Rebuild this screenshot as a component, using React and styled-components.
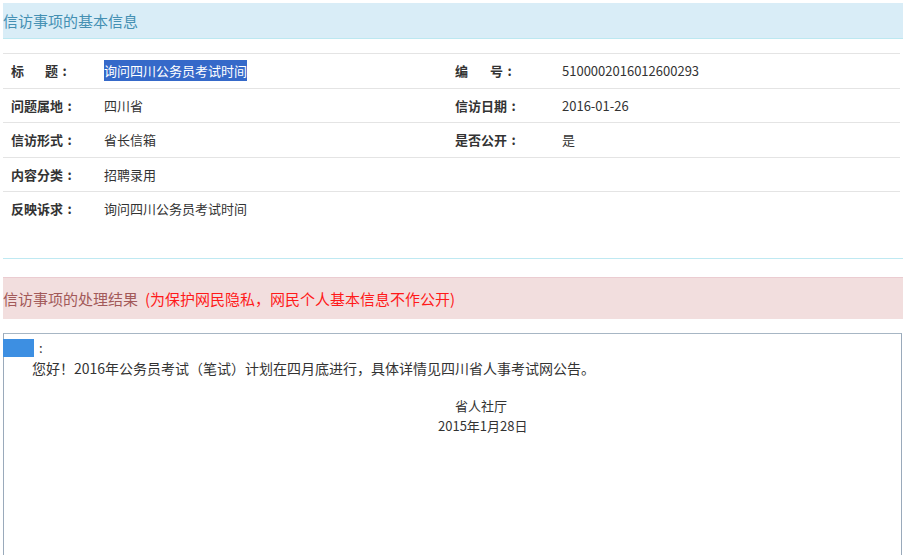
import React from "react";
import styled, { createGlobalStyle } from "styled-components";

const GlobalStyle = createGlobalStyle`
  html, body {
    margin: 0;
    padding: 0;
    background: #fff;
  }
  body {
    font-family: "Noto Sans CJK SC", "Noto Sans", "Liberation Sans", sans-serif;
    font-size: 13px;
    color: #333;
  }
`;

const Page = styled.div`
  padding: 3px 5px 0 3px;
  width: 900px;
`;

const BlueHead = styled.div`
  height: 35px;
  line-height: 35px;
  background: #d9edf7;
  border-bottom: 1px solid #bce8f1;
  color: #4490b3;
  font-size: 15px;
`;

const InfoSection = styled.div`
  margin-top: 14px;
  padding-bottom: 32px;
  border-bottom: 1px solid #bfe9f2;
`;

const Row = styled.div`
  display: grid;
  grid-template-columns: 101px 343px 115px 1fr;
  align-items: center;
  height: 34.5px;
  border-top: 1px solid #e4e4e4;
  width: 897px;
  box-sizing: border-box;
`;

const Label = styled.div`
  padding-left: 8px;
  font-weight: bold;
  color: #333;
  white-space: nowrap;
`;

const Value = styled.div`
  color: #333;
  white-space: nowrap;
`;

const Gap = styled.span`
  display: inline-block;
  width: ${(p) => p.$w}px;
`;

const Colon = styled.span`
  display: inline-block;
  width: 13px;
  text-align: center;
`;

const Selected = styled.span`
  background: #3569c9;
  color: #fff;
  padding: 1px 0;
`;

const PinkHead = styled.div`
  margin-top: 18px;
  height: 41px;
  line-height: 41px;
  background: #f2dede;
  border-top: 1px solid #ebccd1;
  color: #a25959;
  font-size: 15px;
`;

const Notice = styled.span`
  color: #ff1a1a;
  margin-left: 7px;
`;

const ReplyBox = styled.div`
  margin-top: 14px;
  height: 240px;
  border: 1px solid #9aaabb;
  border-top-color: #a7b6c4;
  padding-top: 4px;
  line-height: 20px;
  box-sizing: border-box;
  width: 899px;
`;

const Line = styled.div`
  padding-left: ${(p) => p.$indent || 0}px;
  font-size: ${(p) => p.$size || 13}px;
  white-space: nowrap;
`;

const NameMask = styled.span`
  display: inline-block;
  width: 31px;
  height: 18px;
  margin-left: -1px;
  vertical-align: -4px;
  background: #3d8fe2;
  margin-right: 5px;
`;

const Sign = styled.div`
  margin-top: 18px;
`;

export default function App() {
  return (
    <>
      <GlobalStyle />
      <Page>
        <BlueHead>信访事项的基本信息</BlueHead>
        <InfoSection>
          <Row>
            <Label>
              标<Gap $w={21} />题<Colon>:</Colon>
            </Label>
            <Value>
              <Selected>询问四川公务员考试时间</Selected>
            </Value>
            <Label>
              编<Gap $w={22} />号<Colon>:</Colon>
            </Label>
            <Value>5100002016012600293</Value>
          </Row>
          <Row>
            <Label>问题属地<Colon>:</Colon></Label>
            <Value>四川省</Value>
            <Label>信访日期<Colon>:</Colon></Label>
            <Value>2016-01-26</Value>
          </Row>
          <Row>
            <Label>信访形式<Colon>:</Colon></Label>
            <Value>省长信箱</Value>
            <Label>是否公开<Colon>:</Colon></Label>
            <Value>是</Value>
          </Row>
          <Row>
            <Label>内容分类<Colon>:</Colon></Label>
            <Value>招聘录用</Value>
            <Label />
            <Value />
          </Row>
          <Row>
            <Label>反映诉求<Colon>:</Colon></Label>
            <Value>询问四川公务员考试时间</Value>
            <Label />
            <Value />
          </Row>
        </InfoSection>
        <PinkHead>
          信访事项的处理结果<Notice>(为保护网民隐私，网民个人基本信息不作公开)</Notice>
        </PinkHead>
        <ReplyBox>
          <Line>
            <NameMask />:
          </Line>
          <Line $indent={28} $size={14}>
            您好！2016年公务员考试（笔试）计划在四月底进行，具体详情见四川省人事考试网公告。
          </Line>
          <Sign>
            <Line $indent={451}>省人社厅</Line>
            <Line $indent={434}>2015年1月28日</Line>
          </Sign>
        </ReplyBox>
      </Page>
    </>
  );
}
